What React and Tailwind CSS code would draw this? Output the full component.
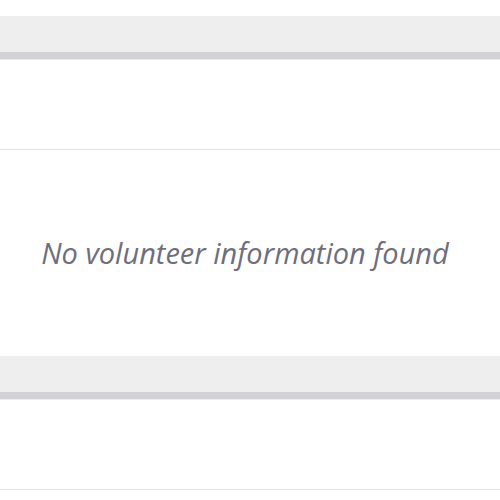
export default function App() {
  return (
    <div className="w-[500px] h-[500px] overflow-hidden bg-white" style={{ fontFamily: "'Open Sans', Lato, sans-serif" }}>
      <div className="pt-[16px]">
        <div className="h-[36px] bg-[#eeeeef]" />
        <div className="h-[7px] bg-[#d2d2d6]" />
        <div className="h-[1px] bg-[#ebebed]" />
        <div className="h-[90px] border-b border-[#e2e2e4]" />
        <div className="h-[206px] flex items-center justify-center pb-[2px] pr-[10px]">
          <p className="italic text-[29px] text-[#6e6e7c] leading-none">No volunteer information found</p>
        </div>
        <div className="h-[36px] bg-[#eeeeef]" />
        <div className="h-[7px] bg-[#d2d2d6]" />
        <div className="h-[1px] bg-[#ebebed]" />
        <div className="h-[90px] border-b border-[#e2e2e4]" />
      </div>
    </div>
  );
}
